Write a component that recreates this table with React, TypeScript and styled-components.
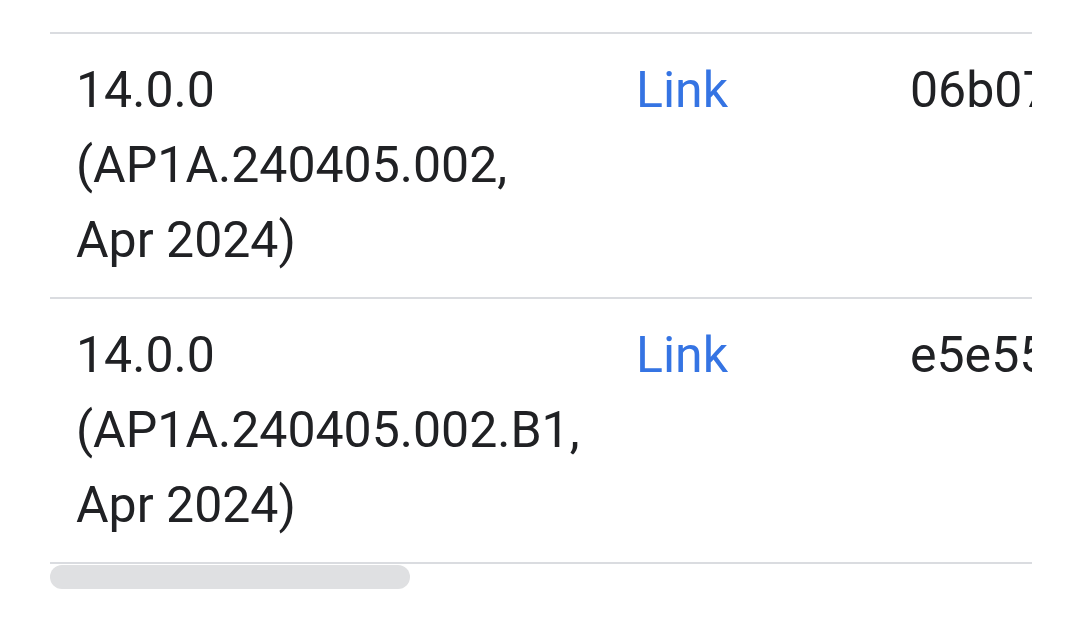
import React from "react";
import styled, { createGlobalStyle } from "styled-components";

const Global = createGlobalStyle`
  html, body {
    margin: 0;
    padding: 0;
    background: #ffffff;
  }
  body {
    font-family: Roboto, "Noto Sans", "Liberation Sans", sans-serif;
    color: #202124;
  }
`;

const Page = styled.div`
  padding: 32px 48px 0 50px;
`;

const Scroller = styled.div`
  overflow: hidden;
  width: 100%;
`;

const Table = styled.table`
  border-collapse: collapse;
  table-layout: fixed;
  width: 2680px;
  font-size: 50px;
  line-height: 75px;
`;

const Row = styled.tr`
  border-top: 2px solid #dadce0;
  border-bottom: 2px solid #dadce0;
`;

const Cell = styled.td<{ $w: number }>`
  width: ${(p) => p.$w}px;
  box-sizing: border-box;
  padding: 19px 26px 19px 26px;
  vertical-align: top;
  text-align: left;
  font-weight: 400;
`;

const HashCell = styled(Cell)`
  white-space: nowrap;
`;

const DocLink = styled.a`
  color: #3574e3;
  text-decoration: none;
`;

const Track = styled.div`
  margin-top: 1px;
  height: 24px;
  display: flex;
`;

const Thumb = styled.div`
  height: 24px;
  border-radius: 12px;
  background: #dfe0e2;
`;

const rows = [
  {
    version: ["14.0.0", "(AP1A.240405.002,", "Apr 2024)"],
    hash: "06b077a1f0c9e53d2b8a41f6c7e09d3a5b2f8e1c4d7a9b6e3f0c2d5a8b1e4f7",
  },
  {
    version: ["14.0.0", "(AP1A.240405.002.B1,", "Apr 2024)"],
    hash: "e5e55c3b9a0d7f2e6c1b8a4d3f5e9c0b2a7d6e1f8c4b3a9d0e5f2c7b1a6d8e3",
  },
];

export default function App() {
  const tableWidth = 2680;
  const viewport = 982;
  const thumbWidth = Math.round((viewport * viewport) / tableWidth);
  return (
    <>
      <Global />
      <Page>
        <Scroller>
          <Table>
            <tbody>
              {rows.map((r) => (
                <Row key={r.hash}>
                  <Cell $w={560}>
                    {r.version.map((line, i) => (
                      <React.Fragment key={i}>
                        {line}
                        {i < r.version.length - 1 && <br />}
                      </React.Fragment>
                    ))}
                  </Cell>
                  <Cell $w={274}>
                    <DocLink href="#">Link</DocLink>
                  </Cell>
                  <HashCell $w={1846}>{r.hash}</HashCell>
                </Row>
              ))}
            </tbody>
          </Table>
        </Scroller>
        <Track>
          <Thumb style={{ width: thumbWidth }} />
        </Track>
      </Page>
    </>
  );
}
